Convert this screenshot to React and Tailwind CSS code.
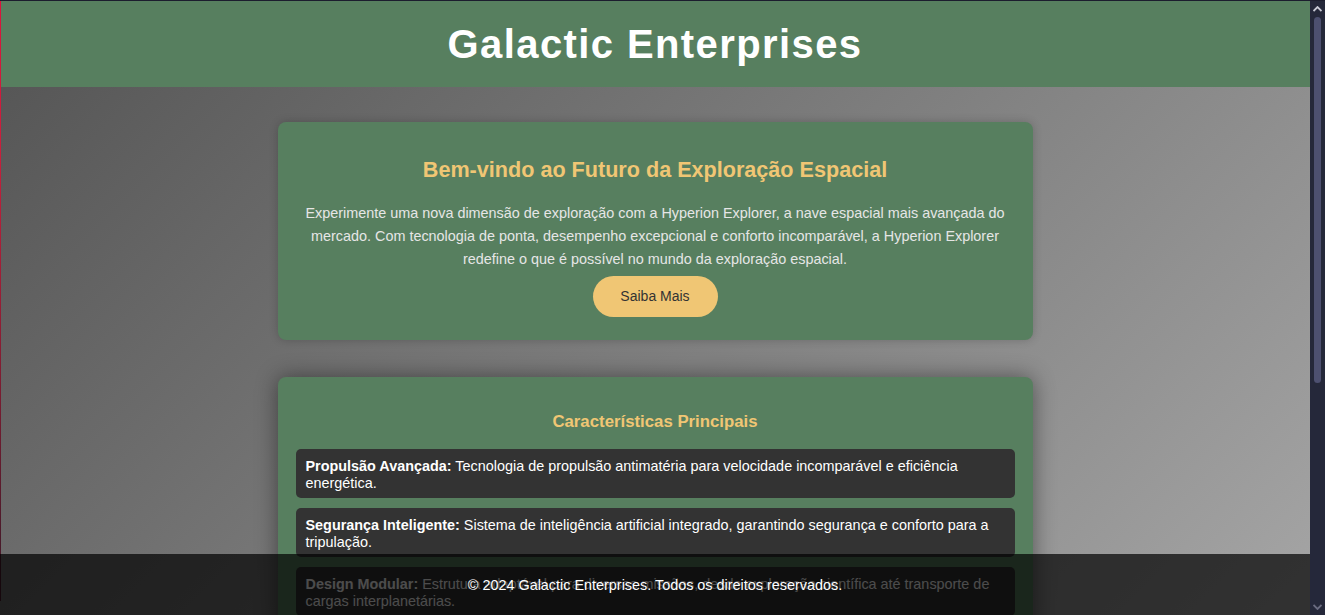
import React from "react";

const features = [
  {
    t: "Propulsão Avançada:",
    d: "Tecnologia de propulsão antimatéria para velocidade incomparável e eficiência energética.",
  },
  {
    t: "Segurança Inteligente:",
    d: "Sistema de inteligência artificial integrado, garantindo segurança e conforto para a tripulação.",
  },
  {
    t: "Design Modular:",
    d: "Estrutura adaptável para diversas missões, desde exploração científica até transporte de cargas interplanetárias.",
  },
  {
    t: "Conforto Premium:",
    d: "Cabines espaçosas com gravidade artificial e sistemas de suporte de vida de última geração.",
  },
];

export default function App() {
  return (
    <div
      className="h-[615px] w-full flex flex-col bg-[#1c1d2e]"
      style={{ fontFamily: '"Liberation Sans", Arial, sans-serif' }}
    >
      <div className="h-px shrink-0 bg-[#1c1d2e]" />
      <div className="flex flex-1 min-h-0">
        <div className="relative flex-1 min-w-0 overflow-hidden">
          <div className="relative min-h-[983px] bg-[linear-gradient(135deg,#535353,#b5b5b5)]">
            <div className="absolute left-0 top-0 h-[600px] w-px bg-[linear-gradient(to_bottom,#dc143c_0%,#c8203c_25%,#4a1a2a_90%)]" />
            <header className="h-[86px] bg-[#577f5f] flex items-center justify-center">
              <h1 className="text-[40px] leading-none font-bold tracking-[1.4px] text-white">Galactic Enterprises</h1>
            </header>
            <main className="pt-[35px] flex flex-col items-center gap-[37px]">
              <section className="w-[755px] rounded-lg bg-[#577f5f] px-5 pt-[35px] pb-[23px] text-center shadow-[0_0_10px_rgba(0,0,0,0.2)]">
                <h2 className="text-[21.6px] leading-[25px] font-bold text-[#f0c674]">
                  Bem-vindo ao Futuro da Exploração Espacial
                </h2>
                <p className="mt-[20px] text-[14.4px] leading-[23px] text-[#e6e6e6]">
                  Experimente uma nova dimensão de exploração com a Hyperion Explorer, a nave espacial mais avançada do
                  mercado. Com tecnologia de ponta, desempenho excepcional e conforto incomparável, a Hyperion Explorer
                  redefine o que é possível no mundo da exploração espacial.
                </p>
                <button className="mt-[5px] h-[41px] w-[125px] rounded-full bg-[#f0c674] text-[14px] text-[#333]">
                  Saiba Mais
                </button>
              </section>
              <section className="w-[755px] rounded-lg bg-[#577f5f] px-[18px] pt-[35px] pb-[18px] shadow-[0_0_22px_rgba(0,0,0,0.45)]">
                <h3 className="text-center text-[16.8px] leading-[20px] font-bold text-[#f0c674]">
                  Características Principais
                </h3>
                <ul className="mt-[17px] flex flex-col gap-[10px]">
                  {features.map((f) => (
                    <li
                      key={f.t}
                      className="rounded-[5px] bg-[#333333] px-[10px] pt-[9px] pb-[6px] text-[14.4px] leading-[17px] text-white"
                    >
                      <strong className="font-bold">{f.t}</strong> {f.d}
                    </li>
                  ))}
                </ul>
              </section>
            </main>
          </div>
          <footer className="absolute bottom-0 left-0 right-0 h-[61px] pt-[3px] bg-black/70 flex items-center justify-center">
            <p className="text-[14.4px] text-white">© 2024 Galactic Enterprises. Todos os direitos reservados.</p>
          </footer>
        </div>
        <div className="w-[15px] shrink-0 bg-[#25283a] flex flex-col items-center">
          <svg width="9" height="6" viewBox="0 0 9 6" className="mt-[5px]">
            <path d="M0.5 5 L4.5 1 L8.5 5" fill="none" stroke="#c8c9d4" strokeWidth="1.8" />
          </svg>
          <div className="mt-[5px] h-[366px] w-[7px] rounded-full bg-[#4d5070]" />
          <div className="flex-1" />
          <svg width="9" height="6" viewBox="0 0 9 6" className="mb-[5px]">
            <path d="M0.5 1 L4.5 5 L8.5 1" fill="none" stroke="#6a6c80" strokeWidth="1.8" />
          </svg>
        </div>
      </div>
    </div>
  );
}
